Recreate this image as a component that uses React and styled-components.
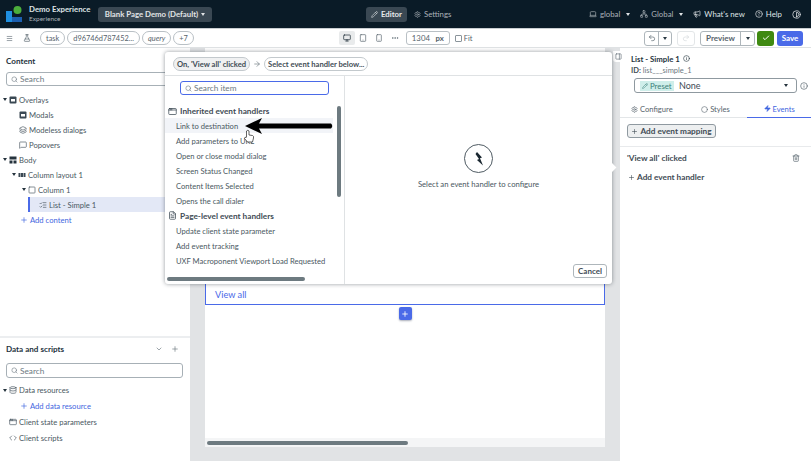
import React from "react";
import styled, { createGlobalStyle } from "styled-components";
import {
  Search,
  Settings,
  Pencil,
  Monitor,
  Tablet,
  Smartphone,
  Ellipsis,
  Undo2,
  Redo2,
  Check,
  ChevronDown,
  Plus,
  Info,
  Trash2,
  Zap,
  Code,
  Database,
  Megaphone,
  CircleHelp,
  Contrast,
  Laptop,
  Network,
  Menu,
  Square,
  MessageSquare,
  PanelRight,
  FileText,
  AppWindow,
  ArrowRight,
  FlaskConical,
  Circle,
  ListChecks,
  Layers,
} from "lucide-react";

const GlobalStyle = createGlobalStyle`
  * { box-sizing: border-box; }
  html, body { margin: 0; padding: 0; background: #fff; }
  body { font-family: Lato, "Open Sans", sans-serif; color: #2b3a44; }
`;

const Page = styled.div`
  width: 811px;
  height: 461px;
  overflow: hidden;
  position: relative;
  display: flex;
  flex-direction: column;
`;

const TopBar = styled.header`
  height: 28px;
  background: #0a1b27;
  display: flex;
  align-items: center;
  padding: 0 10px 0 6px;
  color: #c9ced2;
  font-size: 7.8px;
  flex: none;
`;

const Brand = styled.div`
  display: flex;
  flex-direction: column;
  margin-left: 7px;
  width: 69px;
  line-height: 10px;
  b { font-size: 7.8px; font-weight: 700; color: #dfe3e6; }
  span { font-size: 6.5px; color: #aab2b8; }
`;

const PageSelect = styled.div`
  height: 15px;
  width: 114px;
  border-radius: 3px;
  background: #3a4853;
  color: #e1e4e6;
  font-size: 7.8px;
  font-weight: 700;
  display: flex;
  align-items: center;
  justify-content: center;
  gap: 3px;
  margin-right: 154px;
`;

const Mode = styled.div`
  height: 15px;
  display: flex;
  align-items: center;
  gap: 3px;
  padding: 0 5px;
  border-radius: 3px;
  font-size: 7.8px;
  background: ${(p) => (p.$active ? "#3a4853" : "transparent")};
  color: ${(p) => (p.$active ? "#e6e9eb" : "#aab2b8")};
  font-weight: ${(p) => (p.$active ? 700 : 400)};
  margin-right: 2px;
`;

const TopRight = styled.div`
  margin-left: auto;
  display: flex;
  align-items: center;
  gap: 10px;
`;

const TopItem = styled.span`
  display: flex;
  align-items: center;
  gap: 3px;
  font-size: 7.8px;
  color: ${(p) => (p.$bright ? "#dfe3e6" : "#aab2b8")};
`;

const Caret = styled.i`
  display: inline-block;
  width: 0;
  height: 0;
  border-left: 2.5px solid transparent;
  border-right: 2.5px solid transparent;
  border-top: 3px solid ${(p) => p.$color || "#2b3a44"};
  margin-left: ${(p) => p.$gap || 0}px;
  flex: none;
`;

const ToolBar = styled.div`
  height: 19px;
  background: #fff;
  display: flex;
  align-items: center;
  padding: 0 8px 0 6px;
  color: #56636c;
  flex: none;
  border-top: 1px solid #c9ced2;
`;

const Chip = styled.span`
  height: 14px;
  border: 1px solid #b9c0c5;
  border-radius: 7px;
  padding: 0 5px;
  font-size: 7.4px;
  display: flex;
  align-items: center;
  color: #56636c;
  font-style: ${(p) => (p.$italic ? "italic" : "normal")};
  margin-right: 2px;
`;

const ToolSpacer = styled.span`
  width: ${(p) => p.$w}px;
  flex: none;
`;

const PushRight = styled.span`
  margin-left: auto;
`;

const ToolIcon = styled.span`
  width: ${(p) => p.$w || 16}px;
  height: 14px;
  display: flex;
  align-items: center;
  justify-content: center;
  border-radius: 2px;
  background: ${(p) => (p.$active ? "#e9ebec" : "transparent")};
  color: ${(p) => (p.$active ? "#14232e" : "#56636c")};
`;

const WidthBox = styled.div`
  width: 44px;
  height: 14px;
  border: 1px solid #b9c0c5;
  border-radius: 3px;
  font-size: 7.8px;
  display: flex;
  align-items: center;
  justify-content: space-between;
  padding: 0 5px;
  margin-left: 3px;
  b { font-weight: 700; }
`;

const FitCheck = styled.span`
  width: 7px;
  height: 7px;
  border: 1px solid #8a949b;
  border-radius: 1px;
  margin-left: 5px;
`;

const FitLabel = styled.span`
  font-size: 7.4px;
  margin-left: 2px;
`;

const Split = styled.div`
  display: flex;
  height: 15px;
  border: 1px solid ${(p) => (p.$off ? "#e3e6e8" : "#aeb6bb")};
  border-radius: 3px;
  align-items: center;
  margin-right: ${(p) => p.$mr || 0}px;
  font-size: 8px;
  font-weight: 700;
  color: #56636c;
`;

const SplitPart = styled.span`
  height: 100%;
  width: ${(p) => p.$w}px;
  display: flex;
  align-items: center;
  justify-content: center;
  & + & { border-left: 1px solid #aeb6bb; }
`;

const Solid = styled.span`
  height: 15px;
  width: ${(p) => p.$w}px;
  background: ${(p) => p.$bg};
  color: #fff;
  border-radius: 3px;
  font-size: 8px;
  font-weight: 700;
  display: flex;
  align-items: center;
  justify-content: center;
  margin-left: ${(p) => p.$ml || 0}px;
`;

const Body = styled.div`
  flex: 1;
  display: flex;
  min-height: 0;
  border-top: 1px solid #dfe2e4;
`;

const LeftPanel = styled.aside`
  width: 190px;
  flex: none;
  background: #fff;
  display: flex;
  flex-direction: column;
`;

const PanelTitle = styled.div`
  font-size: 8.1px;
  font-weight: 700;
  color: #25333d;
  height: 12px;
  display: flex;
  align-items: center;
  justify-content: space-between;
  padding-right: 11px;
  margin: ${(p) => p.$m};
`;

const PanelTools = styled.span`
  display: flex;
  align-items: center;
  gap: 8px;
  color: #6d7981;
`;

const SearchBox = styled.div`
  height: ${(p) => p.$h || 14}px;
  width: 177px;
  margin: 0 0 0 6px;
  border: 1px solid #a7b0b6;
  border-radius: 3px;
  display: flex;
  align-items: center;
  gap: 2px;
  padding-left: 4px;
  font-size: 8.25px;
  color: #6d7981;
  flex: none;
`;

const Tree = styled.div`
  margin-top: ${(p) => p.$mt}px;
  display: flex;
  flex-direction: column;
`;

const TreeRow = styled.div`
  height: ${(p) => p.$h || 15}px;
  display: flex;
  align-items: center;
  gap: 2px;
  font-size: 7.65px;
  padding-left: ${(p) => p.$depth}px;
  color: ${(p) => (p.$link ? "#3f66e0" : "#4a5862")};
  background: ${(p) => (p.$selected ? "#e3e8f6" : "transparent")};
  border-left: ${(p) => (p.$selected ? "2px solid #4a6ae8" : "none")};
  margin-left: ${(p) => (p.$selected ? "28px" : "0")};
`;

const Divider = styled.div`
  height: 2px;
  background: #eceef0;
  margin-top: auto;
`;

const DataSection = styled.section`
  height: 123px;
  flex: none;
`;

const Canvas = styled.main`
  flex: 1;
  background: #e1e3e5;
  padding: 0 15px;
`;

const Sheet = styled.div`
  height: 399px;
  background: #fff;
  display: flex;
  flex-direction: column;
  align-items: center;
  padding-top: 236px;
`;

const ViewAll = styled.div`
  width: 100%;
  height: 21px;
  border: 1px solid #4a6ae8;
  border-top: none;
  color: #4a6ae8;
  font-size: 9.2px;
  display: flex;
  align-items: center;
  padding-left: 9px;
  flex: none;
`;

const AddButton = styled.span`
  width: 13px;
  height: 13px;
  border-radius: 2px;
  background: #4a6ae8;
  color: #fff;
  display: flex;
  align-items: center;
  justify-content: center;
  margin-top: 2px;
  box-shadow: 0 1px 2px rgba(40, 50, 80, 0.4);
  flex: none;
`;

const ScrollTrack = styled.div`
  width: 100%;
  height: 9px;
  margin-top: auto;
  background: #f4f5f6;
  padding: 3px 0 0 2px;
  flex: none;
`;

const ScrollThumb = styled.div`
  height: 4px;
  width: 201px;
  border-radius: 2px;
  background: #6d7a80;
`;

const RightPanel = styled.aside`
  width: 191px;
  flex: none;
  background: #fff;
  position: relative;
  padding-top: 5px;
`;

const Heading = styled.div`
  display: flex;
  align-items: center;
  gap: 3px;
  font-size: 7.8px;
  font-weight: 700;
  padding-left: 11px;
  color: #25333d;
  height: 11px;
`;

const IdLine = styled.div`
  font-size: 7.5px;
  padding-left: 11px;
  margin-top: 2px;
  height: 11px;
  color: #6d7981;
  b { color: #3f4c55; font-weight: 700; }
`;

const PresetRow = styled.div`
  display: flex;
  align-items: center;
  gap: 3px;
  padding-left: 14px;
  margin-top: 1px;
  color: #56636c;
`;

const PresetBox = styled.div`
  width: 163px;
  height: 15px;
  border: 1px solid #8f99a0;
  border-radius: 3px;
  display: flex;
  align-items: center;
  padding: 0 8px 0 5px;
  font-size: 9px;
  color: #3f4c55;
`;

const PresetTag = styled.span`
  display: flex;
  align-items: center;
  gap: 2px;
  height: 10px;
  width: 34px;
  background: #cfeeea;
  color: #3b7f78;
  font-size: 7.8px;
  padding: 0 1px 0 2px;
  margin-right: 5px;
`;

const PresetCaret = styled.span`
  margin-left: auto;
  display: flex;
`;

const Tabs = styled.div`
  display: flex;
  height: 18px;
  margin-top: 7px;
  border-bottom: 1px solid #e3e6e8;
`;

const Tab = styled.div`
  flex: 1;
  display: flex;
  align-items: center;
  justify-content: center;
  gap: 2px;
  font-size: 7.6px;
  color: ${(p) => (p.$active ? "#3f66e0" : "#56636c")};
  border-bottom: ${(p) => (p.$active ? "1px solid #4a6ae8" : "none")};
  height: 18px;
`;

const MappingWrap = styled.div`
  padding: 6px 7px 8px;
  border-bottom: 1px solid #e8eaec;
`;

const MappingButton = styled.span`
  width: 89px;
  height: 14px;
  border: 1px solid #8f99a0;
  border-radius: 3px;
  background: #edeff0;
  display: flex;
  align-items: center;
  justify-content: center;
  gap: 2px;
  font-size: 8.25px;
  font-weight: 700;
  color: #3f4c55;
`;

const EventRow = styled.div`
  display: flex;
  align-items: center;
  justify-content: space-between;
  padding: 0 11px 0 7px;
  height: 12px;
  margin-top: 5px;
  font-size: 8.25px;
  font-weight: 700;
  color: #3f4c55;
`;

const AddHandler = styled.div`
  display: flex;
  align-items: center;
  gap: 2px;
  height: 12px;
  padding-left: 8px;
  margin-top: 7px;
  font-size: 8.25px;
  font-weight: 700;
  color: #3f4c55;
`;

const Collapse = styled.span`
  position: absolute;
  left: -7px;
  top: 3px;
  width: 11px;
  height: 11px;
  background: #fff;
  border-radius: 0 0 3px 3px;
  display: flex;
  align-items: center;
  justify-content: center;
  color: #56636c;
  z-index: 3;
`;

const Popover = styled.div`
  position: absolute;
  left: 165px;
  top: 52px;
  width: 447px;
  height: 232px;
  background: #fff;
  border-radius: 3px;
  box-shadow: 0 0 4px rgba(20, 30, 40, 0.45);
  display: flex;
  flex-direction: column;
  z-index: 5;
  &::after {
    content: "";
    position: absolute;
    right: -3px;
    top: 112px;
    width: 7px;
    height: 7px;
    background: #fff;
    transform: rotate(45deg);
  }
`;

const Crumbs = styled.div`
  height: 24px;
  border-bottom: 1px solid #dfe2e4;
  display: flex;
  align-items: center;
  gap: 3px;
  padding-left: 8px;
  color: #6d7981;
  flex: none;
`;

const Crumb = styled.span`
  height: 14px;
  border: 1px solid #c3c9cd;
  border-radius: 7px;
  padding: 0 3px;
  display: flex;
  align-items: center;
  font-size: 7.6px;
  font-weight: 700;
  color: #3f4c55;
  background: ${(p) => (p.$on ? "#f0f1f2" : "#fff")};
`;

const PopBody = styled.div`
  flex: 1;
  min-height: 0;
  display: flex;
`;

const HandlerCol = styled.div`
  width: 180px;
  flex: none;
  border-right: 1px solid #dfe2e4;
  position: relative;
`;

const HandlerList = styled.div`
  height: 197px;
  overflow: hidden;
  padding-top: 5px;
`;

const HandlerSearch = styled(SearchBox)`
  width: 149px;
  margin: 0 0 9px 15px;
  border: 1.5px solid #4a6ae8;
`;

const GroupTitle = styled.div`
  height: ${(p) => p.$h || 15}px;
  display: flex;
  align-items: center;
  gap: 3px;
  padding-left: 3px;
  font-size: 8.25px;
  font-weight: 700;
  color: #3f4c55;
`;

const HandlerItem = styled.div`
  height: 15px;
  width: 168px;
  display: flex;
  align-items: center;
  padding-left: 11px;
  font-size: 7.6px;
  color: #4a5862;
  white-space: nowrap;
  background: ${(p) => (p.$hover ? "#f2f4f8" : "transparent")};
`;

const VScroll = styled.div`
  position: absolute;
  right: 3px;
  top: 30px;
  width: 4px;
  height: 91px;
  border-radius: 2px;
  background: #6d7a80;
`;

const BottomScroll = styled.div`
  position: absolute;
  left: 2px;
  bottom: 3px;
  width: 138px;
  height: 4px;
  border-radius: 2px;
  background: #6d7a80;
`;

const DetailCol = styled.div`
  flex: 1;
  position: relative;
  display: flex;
  flex-direction: column;
  align-items: center;
  padding-top: 68px;
  font-size: 7.7px;
  color: #4a5862;
`;

const HandlerBadge = styled.span`
  width: 29px;
  height: 29px;
  border: 1px solid #4f5b63;
  border-radius: 50%;
  display: flex;
  align-items: center;
  justify-content: center;
  margin-bottom: 6px;
  color: #1a2730;
`;

const CancelButton = styled.span`
  position: absolute;
  right: 5px;
  bottom: 6px;
  width: 34px;
  height: 14px;
  border: 1px solid #aeb6bb;
  border-radius: 3px;
  display: flex;
  align-items: center;
  justify-content: center;
  font-size: 8px;
  font-weight: 700;
  color: #3f4c55;
`;

const Annotation = styled.svg`
  position: absolute;
  left: 240px;
  top: 114px;
  z-index: 6;
`;

const Logo = () => (
  <svg width="16" height="16" viewBox="0 0 16 16">
    <rect x="0" y="5" width="6" height="11" fill="#1f8fe0" />
    <rect x="6" y="11" width="10" height="5" fill="#1c5fb0" />
    <circle cx="11.5" cy="4" r="4" fill="#4caf3c" />
  </svg>
);

const OverlayIcon = () => (
  <svg width="8" height="8" viewBox="0 0 8 8">
    <rect x="0.5" y="0.5" width="7" height="7" rx="1" fill="#3a4853" />
    <rect x="2" y="3" width="4" height="2.5" fill="#fff" />
  </svg>
);

const BodyIcon = () => (
  <svg width="8" height="8" viewBox="0 0 8 8" fill="#25333d">
    <rect x="0.5" y="0.5" width="7" height="3" />
    <rect x="0.5" y="4.5" width="3" height="3" />
    <rect x="4.5" y="4.5" width="3" height="3" />
  </svg>
);

const ColumnsIcon = () => (
  <svg width="8" height="8" viewBox="0 0 8 8" fill="#3a4853">
    <rect x="0.5" y="2" width="2" height="4" />
    <rect x="3" y="2" width="2" height="4" />
    <rect x="5.5" y="2" width="2" height="4" />
  </svg>
);

const DialogsIcon = () => <Layers size={8} />;
const PopoverIcon = () => <MessageSquare size={8} />;
const ColumnIcon = () => <Square size={8} />;

const treeRows = [
  { label: "Overlays", depth: 3, caret: true, icon: OverlayIcon },
  { label: "Modals", depth: 19, icon: OverlayIcon },
  { label: "Modeless dialogs", depth: 19, icon: DialogsIcon },
  { label: "Popovers", depth: 19, icon: PopoverIcon },
  { label: "Body", depth: 3, caret: true, icon: BodyIcon },
  { label: "Column layout 1", depth: 12, caret: true, icon: ColumnsIcon },
  { label: "Column 1", depth: 22, caret: true, icon: ColumnIcon },
];

const inherited = [
  "Link to destination",
  "Add parameters to URL",
  "Open or close modal dialog",
  "Screen Status Changed",
  "Content Items Selected",
  "Opens the call dialer",
];

const pageLevel = [
  "Update client state parameter",
  "Add event tracking",
  "UXF Macroponent Viewport Load Requested",
  "Reload",
];

export default function App() {
  return (
    <Page>
      <GlobalStyle />
      <TopBar>
        <Logo />
        <Brand>
          <b>Demo Experience</b>
          <span>Experience</span>
        </Brand>
        <PageSelect>
          Blank Page Demo (Default)
          <Caret $color="#e1e4e6" />
        </PageSelect>
        <Mode $active>
          <Pencil size={7} />
          Editor
        </Mode>
        <Mode>
          <Settings size={7} />
          Settings
        </Mode>
        <TopRight>
          <TopItem>
            <Laptop size={8} />
            global
            <Caret $color="#dfe3e6" $gap={3} />
          </TopItem>
          <TopItem>
            <Network size={8} />
            Global
            <Caret $color="#dfe3e6" $gap={3} />
          </TopItem>
          <TopItem $bright>
            <Megaphone size={8} />
            What's new
          </TopItem>
          <TopItem $bright>
            <CircleHelp size={8} />
            Help
          </TopItem>
          <TopItem $bright>
            <Contrast size={9} />
          </TopItem>
        </TopRight>
      </TopBar>

      <ToolBar>
        <Menu size={7} />
        <ToolIcon $w={27}>
          <FlaskConical size={8} />
        </ToolIcon>
        <Chip>task</Chip>
        <Chip>d96746d787452...</Chip>
        <Chip $italic>query</Chip>
        <Chip>+7</Chip>
        <ToolSpacer $w={143} />
        <ToolIcon $active>
          <Monitor size={8} />
        </ToolIcon>
        <ToolIcon>
          <Tablet size={8} />
        </ToolIcon>
        <ToolIcon>
          <Smartphone size={8} />
        </ToolIcon>
        <ToolIcon>
          <Ellipsis size={8} />
        </ToolIcon>
        <WidthBox>
          1304 <b>px</b>
        </WidthBox>
        <FitCheck />
        <FitLabel>Fit</FitLabel>
        <PushRight />
        <Split $mr={5}>
          <SplitPart $w={13}>
            <Undo2 size={8} />
          </SplitPart>
          <SplitPart $w={13}>
            <Caret />
          </SplitPart>
        </Split>
        <Split $off $mr={5}>
          <SplitPart $w={16}>
            <Redo2 size={8} color="#d5d9dc" />
          </SplitPart>
        </Split>
        <Split>
          <SplitPart $w={39}>Preview</SplitPart>
          <SplitPart $w={14}>
            <Caret />
          </SplitPart>
        </Split>
        <Solid $w={17} $bg="#3f8a12" $ml={2}>
          <Check size={8} strokeWidth={3} />
        </Solid>
        <Solid $w={26} $bg="#4a6ae8" $ml={3}>
          Save
        </Solid>
      </ToolBar>

      <Body>
        <LeftPanel>
          <PanelTitle $m="7px 0 5px 6px">Content</PanelTitle>
          <SearchBox>
            <Search size={7} />
            Search
          </SearchBox>
          <Tree $mt={6}>
            {treeRows.map((row) => (
              <TreeRow key={row.label} $depth={row.depth}>
                {row.caret && <Caret $color="#25333d" />}
                <row.icon />
                {row.label}
              </TreeRow>
            ))}
            <TreeRow $depth={9} $selected>
              <ListChecks size={8} />
              List - Simple 1
            </TreeRow>
            <TreeRow $depth={20} $link>
              <Plus size={8} />
              Add content
            </TreeRow>
          </Tree>
          <Divider />
          <DataSection>
            <PanelTitle $m="5px 0 8px 6px">
              Data and scripts
              <PanelTools>
                <ChevronDown size={8} />
                <Plus size={8} />
              </PanelTools>
            </PanelTitle>
            <SearchBox $h={15}>
              <Search size={7} />
              Search
            </SearchBox>
            <Tree $mt={4}>
              <TreeRow $depth={3} $h={16}>
                <Caret $color="#25333d" />
                <Database size={8} />
                Data resources
              </TreeRow>
              <TreeRow $depth={20} $h={16} $link>
                <Plus size={8} />
                Add data resource
              </TreeRow>
              <TreeRow $depth={9} $h={16}>
                <AppWindow size={8} />
                Client state parameters
              </TreeRow>
              <TreeRow $depth={9}>
                <Code size={8} />
                Client scripts
              </TreeRow>
            </Tree>
          </DataSection>
        </LeftPanel>

        <Canvas>
          <Sheet>
            <ViewAll>View all</ViewAll>
            <AddButton>
              <Plus size={8} strokeWidth={2.5} />
            </AddButton>
            <ScrollTrack>
              <ScrollThumb />
            </ScrollTrack>
          </Sheet>
        </Canvas>

        <RightPanel>
          <Collapse>
            <PanelRight size={7} />
          </Collapse>
          <Heading>
            List - Simple 1
            <Info size={7} />
          </Heading>
          <IdLine>
            <b>ID:</b> list___simple_1
          </IdLine>
          <PresetRow>
            <PresetBox>
              <PresetTag>
                <Pencil size={6} />
                Preset
              </PresetTag>
              None
              <PresetCaret>
                <Caret $color="#25333d" />
              </PresetCaret>
            </PresetBox>
            <Info size={8} />
          </PresetRow>
          <Tabs>
            <Tab>
              <Settings size={7} />
              Configure
            </Tab>
            <Tab>
              <Circle size={7} />
              Styles
            </Tab>
            <Tab $active>
              <Zap size={7} fill="currentColor" />
              Events
            </Tab>
          </Tabs>
          <MappingWrap>
            <MappingButton>
              <Plus size={7} />
              Add event mapping
            </MappingButton>
          </MappingWrap>
          <EventRow>
            'View all' clicked
            <Trash2 size={8} color="#56636c" />
          </EventRow>
          <AddHandler>
            <Plus size={7} />
            Add event handler
          </AddHandler>
        </RightPanel>
      </Body>

      <Popover>
        <Crumbs>
          <Crumb $on>On, 'View all' clicked</Crumb>
          <ArrowRight size={8} />
          <Crumb>Select event handler below...</Crumb>
        </Crumbs>
        <PopBody>
          <HandlerCol>
            <HandlerList>
              <HandlerSearch>
                <Search size={7} />
                Search item
              </HandlerSearch>
              <GroupTitle $h={14}>
                <AppWindow size={9} />
                Inherited event handlers
              </GroupTitle>
              {inherited.map((name, i) => (
                <HandlerItem key={name} $hover={i === 0}>
                  {name}
                </HandlerItem>
              ))}
              <GroupTitle>
                <FileText size={9} />
                Page-level event handlers
              </GroupTitle>
              {pageLevel.map((name) => (
                <HandlerItem key={name}>{name}</HandlerItem>
              ))}
            </HandlerList>
            <VScroll />
            <BottomScroll />
          </HandlerCol>
          <DetailCol>
            <HandlerBadge>
              <svg width="14" height="16" viewBox="0 0 14 16" fill="currentColor">
                <path d="M5 1 L10 6.5 L8 7.2 L11 14.5 L5 9 L7 8 L3.5 3 Z" />
              </svg>
            </HandlerBadge>
            Select an event handler to configure
            <CancelButton>Cancel</CancelButton>
          </DetailCol>
        </PopBody>
      </Popover>

      <Annotation width="100" height="32" viewBox="0 0 100 32">
        <path d="M5 12 L22 4 L19 9.5 L91 9.5 Q93.5 12 91 14.5 L19 14.5 L22 20 Z" fill="#000" />
        <path
          d="M6.5 23 L6.5 17 Q8 15.5 9 17 L9 21 L12.5 21.5 Q14 22 13.5 24 L12.5 28 L7.5 28 L4.5 24.5 Q4.5 22.5 6.5 23.5"
          fill="#fff"
          stroke="#222"
          strokeWidth="0.7"
        />
      </Annotation>
    </Page>
  );
}
